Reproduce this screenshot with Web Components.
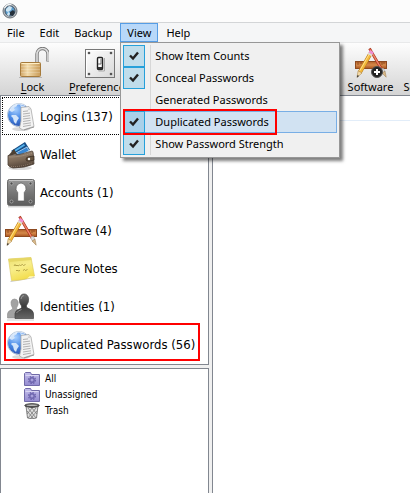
<!DOCTYPE html>
<html lang="en">
<head>
<meta charset="utf-8">
<meta name="viewport" content="width=device-width, initial-scale=1">
<title>Password Manager</title>
<style>
    html, body { margin: 0; height: 100%; }
    body {
        font: 11px/16px "Noto Sans", "Open Sans", sans-serif;
        color: #000;
        background: #f0f0f0;
        overflow: hidden;
    }
</style>
</head>
<body>
<password-app></password-app>

<script>
const define = (name, html, setup) => {
    const template = document.createElement('template');
    template.innerHTML = html;
    customElements.define(name, class extends HTMLElement {
        constructor() {
            super();
            this.attachShadow({ mode: 'open' });
            this.shadowRoot.appendChild(template.content.cloneNode(true));
        }
        connectedCallback() {
            if (setup) setup(this, this.shadowRoot);
        }
    });
};

const tools = `
    <linearGradient id="wood" x2="0" y2="1"><stop offset="0" stop-color="#b4602a"/><stop offset=".5" stop-color="#d58a4a"/><stop offset="1" stop-color="#a9541f"/></linearGradient>
    <rect x="0.5" y="14.5" width="31" height="7" fill="url(#wood)" stroke="#8d4a20"/>
    <path d="M3 15v3M6 15v2M9 15v3M24 15v2M27 15v3M29 15v2" stroke="#7d3c14" stroke-width=".7"/>
    <path d="M14.5 1.5L27 23" stroke="#9c2f18" stroke-width="2.6"/>
    <path d="M14.8 2L27 23" stroke="#e2644a" stroke-width="1.6"/>
    <path d="M15.5 3L26.5 22" stroke="#f8b09a" stroke-width=".5"/>
    <path d="M25.5 22.5l2.6-1.5 2 3.4-2.8 1.6z" fill="#ddd" stroke="#999" stroke-width=".5"/>
    <path d="M27 26l3-1.8 1.2 6z" fill="#d9b98a" stroke="#9b7a4b" stroke-width=".5"/>
    <path d="M15.5 6.5L5 25" stroke="#b67a18" stroke-width="4.2"/>
    <path d="M15.5 6.5L5 25" stroke="#f3b83b" stroke-width="3.2"/>
    <path d="M14.6 6.5L4.5 24.2" stroke="#ffe08a" stroke-width="1"/>
    <path d="M13.6 5.4l1.3-2.4 4 2.2-1.4 2.5z" fill="#ee8fd0"/>
    <path d="M12.7 7l.9-1.6 3.9 2.3-.9 1.6z" fill="#ddd"/>
    <path d="M3.1 23.8l3.9 2.3-5 4.2z" fill="#f2d9a8" stroke="#a47a35" stroke-width=".5"/>
    <path d="M2.5 28l1.6 1-2.3 1.7z" fill="#333"/>`;

const icons = {
    app: [16, `
        <circle cx="8" cy="8" r="7" fill="#b4b9be" stroke="#6c747b"/>
        <circle cx="8" cy="8" r="5" fill="#5b9ccc" stroke="#456"/>
        <path d="M4 6l3-3 3 1-1 3-3 2-2-1zM6 9l2 1-1 3-2-1z" fill="#cfe6f3"/>
        <path d="M8 9l3-2 2 2-2 4-3-1z" fill="#25313c"/>
        <path d="M2.500 5a6.500 6.500 0 0 1 7-3.500" fill="none" stroke="#f4f6f7" stroke-width="1.200"/>`],
    lock: [32, `
        <linearGradient id="gold"><stop offset="0" stop-color="#d0a566"/><stop offset=".35" stop-color="#f2dbab"/><stop offset="1" stop-color="#c99b57"/></linearGradient>
        <path d="M20 15V7a5.500 5.500 0 0 1 11 0v7.500" fill="none" stroke="#777" stroke-width="3.400"/>
        <path d="M20 15V7a5.500 5.500 0 0 1 11 0v7" fill="none" stroke="#dedede" stroke-width="1.600"/>
        <rect x="3.500" y="15.500" width="20" height="14" rx="1" fill="url(#gold)" stroke="#a67b3c"/>
        <path d="M4.500 16.500h18" stroke="#ffeec4"/>
        <path d="M4 19.500h19M4 22.500h19M4 25.500h19" stroke="#fff" stroke-opacity=".2"/>
        <path d="M2 30.500h23" stroke="#000" stroke-opacity=".18"/>`],
    preferences: [32, `
        <linearGradient id="plate" x2="1" y2="1"><stop offset="0" stop-color="#fff"/><stop offset="1" stop-color="#d8d8d8"/></linearGradient>
        <rect x="1.500" y="2.500" width="29" height="28" fill="url(#plate)" stroke="#777"/>
        <path d="M2.500 29.500v-26h27" fill="none" stroke="#fff"/>
        <g fill="#555"><circle cx="5" cy="6" r="1.300"/><circle cx="27" cy="6" r="1.300"/><circle cx="5" cy="27" r="1.300"/><circle cx="27" cy="27" r="1.300"/></g>
        <rect x="13.500" y="10.500" width="5" height="12" rx="1" fill="#fff" stroke="#222" stroke-width="1.400"/>
        <path d="M14 17h3v-5" fill="none" stroke="#666"/>
        <path d="M14 20h4v2.500h-4z" fill="#333"/>
        <path d="M20.500 11v13h-6" fill="none" stroke="#aaa"/>`],
    'software-add': [32, tools + `
        <circle cx="22" cy="25" r="5.500" fill="#222" stroke="#555"/>
        <path d="M22 22v6M19 25h6" stroke="#fff" stroke-width="2"/>`],
    software: [32, tools],
    logins: [32, `
        <radialGradient id="globe" cx=".35" cy=".25" r=".8"><stop offset="0" stop-color="#a8d0ff"/><stop offset=".5" stop-color="#4a8ae6"/><stop offset="1" stop-color="#2850ad"/></radialGradient>
        <ellipse cx="16" cy="28" rx="9" ry="2" fill="#000" opacity=".15"/>
        <circle cx="14" cy="14" r="11.500" fill="url(#globe)" stroke="#c3ced9"/>
        <path d="M4 10l4-5 4-2 0 2-3 2 1 2-3 2-2-1zM7 14l4 0 3 3-2 3-1 3-2-2-1-4-2-2zM15 4l4 1 3 3-4 0-2-2z" fill="#d3e5fa"/>
        <path d="M5 9a10 10 0 0 1 15-4" fill="none" stroke="#fff" stroke-opacity=".7"/>
        <path d="M16 6.500l8-1 2 2.500 3 17.500-11 3.500-3.500-2 1.500-7z" fill="#f3f3f3" stroke="#aaa" stroke-width=".8"/>
        <path d="M24 6l1.500 3-3 .2" fill="#d5d5d5"/>
        <path d="M18 10.500l5-.6M18 13l7-.9M18 15.500l7-.9M18 18l7.500-1M18 20.500l7.500-1.100M18 23l8-1.200M18 25.500l8-1.400" stroke="#aaa" stroke-width=".9"/>
        <path d="M19 29l10-3" stroke="#999"/>`],
    wallet: [32, `
        <linearGradient id="leather" x2=".3" y2="1"><stop offset="0" stop-color="#a18e7c"/><stop offset=".6" stop-color="#7c6957"/><stop offset="1" stop-color="#54453a"/></linearGradient>
        <ellipse cx="15" cy="29" rx="12" ry="2" fill="#000" opacity=".15"/>
        <path d="M6 12l14-9 5 8-12 6z" fill="#174e87"/>
        <path d="M8 12l11-7 1 1.500-11 7z" fill="#55b2ec"/>
        <path d="M11 14l11-6 2 4-9 4z" fill="#3886d2" stroke="#d7efff" stroke-width=".7"/>
        <path d="M3 17l6-7 3 5z" fill="#4d4032"/>
        <path d="M3 16.500q12 0 24-4.500 1 0 1.200 2L29 25q-9 4-21 4-4-1-5-3z" fill="url(#leather)" stroke="#4c4036" stroke-width=".8"/>
        <path d="M4.500 18q12 0 22.500-4" fill="none" stroke="#c5b3a0" stroke-width=".6" stroke-dasharray="1 1"/>
        <path d="M6 27.500q11 .5 21-3.500" fill="none" stroke="#b49f8a" stroke-width=".6" stroke-dasharray="1 1"/>
        <path d="M29 17l-5 .7q-3 .5-3 2.400 0 2.400 3 2l5-1z" fill="#66543f" stroke="#32261e" stroke-width=".7"/>
        <circle cx="24" cy="20" r="1.200" fill="#fff"/>`],
    accounts: [32, `
        <linearGradient id="steel" x2="0" y2="1"><stop offset="0" stop-color="#979797"/><stop offset=".5" stop-color="#777"/><stop offset="1" stop-color="#5c5c5c"/></linearGradient>
        <rect x="2.500" y="2.500" width="27" height="26" rx="2" fill="url(#steel)" stroke="#6b6b6b"/>
        <path d="M4 3.500h24" stroke="#c4c4c4"/>
        <g fill="#4c4c4c" stroke="#b5b5b5" stroke-width=".7"><circle cx="6.500" cy="6.500" r="1.500"/><circle cx="25.500" cy="6.500" r="1.500"/><circle cx="6.500" cy="24.500" r="1.500"/><circle cx="25.500" cy="24.500" r="1.500"/></g>
        <path d="M16 6a5.500 5.500 0 0 1 3.300 9.500v8.500h-6.600v-8.500A5.500 5.500 0 0 1 16 6z" fill="#fff" stroke="#555" stroke-width=".7"/>
        <path d="M3 29.800h26" stroke="#000" stroke-opacity=".25"/>`],
    notes: [32, `
        <linearGradient id="paper" x2=".4" y2="1"><stop offset="0" stop-color="#ecdf70"/><stop offset=".5" stop-color="#f8ee8c"/><stop offset="1" stop-color="#f3de50"/></linearGradient>
        <path d="M5 28l24-4 1 1-24 4z" fill="#000" opacity=".2"/>
        <path d="M3.500 6l22.500-1.500 3.500 18.500q-10 4.500-23 4.500z" fill="url(#paper)" stroke="#dcc85a" stroke-width=".6"/>
        <path d="M3.500 6l22.500-1.500.5 2.500-22.400 2z" fill="#e6d765"/>
        <path d="M9 13l1-1.500 1 1.500 1-1 1 1 1.500-1 1 .5 2-1 1 1 2-1M11 18l1-1 1 1 2-.5M18 17.500l1.500-1 1 1 2-1" fill="none" stroke="#a3913a" stroke-width=".8"/>
        <path d="M22 25.500q5-.5 7.500-2.500l-5 .3z" fill="#fff8b9"/>`],
    identities: [32, `
        <linearGradient id="man" x2="0" y2="1"><stop offset="0" stop-color="#707070"/><stop offset=".5" stop-color="#3c3c3c"/><stop offset="1" stop-color="#666"/></linearGradient>
        <path d="M2.500 27v-4q0-3 4.500-4.500.7-.5.5-1.500-1.700-3-1.500-6 .7-3 3.500-3t3.700 3q.3 3-1.700 6 0 1 1 1.500l4 3.500v5z" fill="#a2a2a2" stroke="#8b8b8b" stroke-width=".6"/>
        <path d="M10 27.500v-5q0-3 5.500-5 1.600-.8 1-2.500-2.500-3-2.100-7 .9-5 4.600-5t4.600 4.500q.4 4-2.100 7-.5 1.700 1 2.500 6 2 6 5.500v5z" fill="url(#man)" stroke="#444" stroke-width=".7"/>
        <path d="M11.500 22q1-2 5-3.500M16 8q.5-3.500 3-3.500" fill="none" stroke="#aaa" stroke-width=".7"/>
        <path d="M2 29h27" stroke="#000" stroke-opacity=".2"/>`],
    folder: [16, `
        <linearGradient id="fold" x2="0" y2="1"><stop offset="0" stop-color="#c3beea"/><stop offset="1" stop-color="#948bd0"/></linearGradient>
        <path d="M.5 14.500v-12l1-1h5l1 2h8v11z" fill="url(#fold)" stroke="#716aa8"/>
        <path d="M1.500 4.500h13" stroke="#d9d5f3"/>
        <circle cx="8" cy="9" r="3.500" fill="none" stroke="#6d64ad" stroke-width="1.200" stroke-dasharray="1.500 1.250"/>
        <circle cx="8" cy="9" r="2.200" fill="none" stroke="#6d64ad" stroke-width="1.400"/>`],
    trash: [16, `
        <path d="M2 3l1.500 12q4.500 1.500 9 0L14 3z" fill="#e0e0e0" stroke="#666" stroke-width=".8"/>
        <path d="M4 5l8 10M7 4l6 7M3 8l6 7M12 5l-8 10M9 4l-6 7M13 8l-6 7" stroke="#777" stroke-width=".8"/>
        <ellipse cx="8" cy="2.500" rx="7.300" ry="1.900" fill="#555" stroke="#333" stroke-width=".7"/>
        <ellipse cx="8" cy="2.200" rx="5.500" ry=".8" fill="#bbb"/>`]
};

define('app-icon', `
    <style>
        :host { display: block; flex: none; }
        svg { display: block; }
    </style>`, (el, root) => {
    const [size, body] = icons[el.getAttribute('name')];
    root.innerHTML += `<svg width="${size}" height="${size}" viewBox="0 0 ${size} ${size}" aria-hidden="true">${body}</svg>`;
});

// Fills the icon holder of a button from the host's icon attribute
const placeIcon = (el, root) => {
    root.querySelector('.icon').innerHTML = `<app-icon name="${el.getAttribute('icon')}"></app-icon>`;
};

define('title-bar', `
    <style>
        :host { display: flex; align-items: center; height: 22px; padding-left: 2px; background: #fcfcfc; border-bottom: 1px solid #d3d5d7; }
    </style>
    <app-icon name="app"></app-icon>`);

define('menu-bar', `
    <style>
        :host { display: flex; gap: 1px; height: 19px; background: #f5f6f7; border-bottom: 1px solid #e8e9ea; }
    </style>
    <slot></slot>`);

define('menu-entry', `
    <style>
        :host { display: block; position: relative; }
        button {
            box-sizing: border-box;
            height: 19px;
            padding: 0 6px;
            font: inherit;
            color: inherit;
            background: none;
            border: 1px solid transparent;
            white-space: nowrap;
        }
        :host([open]) button { background: #b8d8f9; border-color: #569de5; }
        slot[name=popup] { display: none; }
        :host([open]) slot[name=popup] { display: block; }
    </style>
    <button type="button" aria-haspopup="menu"><slot></slot></button>
    <slot name="popup"></slot>`);

define('menu-popup', `
    <style>
        :host {
            box-sizing: border-box;
            display: block;
            position: absolute;
            top: 100%;
            left: 0;
            z-index: 10;
            width: 220px;
            padding: 2px;
            background: #f0f0f0;
            border: 1px solid #979797;
            box-shadow: 3px 3px 3px rgba(0, 0, 0, .5);
        }
        .items { background: linear-gradient(#d7d7d7, #d7d7d7) 27px 0 / 1px 100% no-repeat; }
    </style>
    <div class="items"><slot></slot></div>`);

define('check-item', `
    <style>
        :host { display: block; position: relative; }
        label { display: grid; grid-template-columns: 22px 1fr; column-gap: 10px; align-items: center; height: 22px; }
        input { grid-area: 1 / 1; box-sizing: border-box; appearance: none; width: 22px; height: 22px; margin: 0; }
        input:checked { background: #c0ddeb; border: 1px solid #26a0da; }
        svg { grid-area: 1 / 1; justify-self: center; visibility: hidden; pointer-events: none; z-index: 1; }
        input:checked + svg { visibility: visible; }
        span { grid-area: 1 / 2; }
        :host([active]) label { background: #d1e2f2; box-shadow: inset 0 0 0 1px #78aee5; }
        :host([active]) input:checked { background: #a9d0e9; }
    </style>
    <label>
        <input type="checkbox">
        <svg width="10" height="10" viewBox="0 0 10 10"><path d="M1 4.500l3 3L9 1.500" fill="none" stroke="#222" stroke-width="2.400"/></svg>
        <span><slot></slot></span>
    </label>
    <slot name="mark"></slot>`, (el, root) => {
    root.querySelector('input').checked = el.hasAttribute('checked');
});

// Red frame drawn over the item that holds it
define('red-frame', `
    <style>
        :host {
            box-sizing: border-box;
            position: absolute;
            inset: var(--frame-inset, 0);
            border: 2px solid #f00;
            pointer-events: none;
            z-index: 2;
        }
    </style>`);

define('tool-bar', `
    <style>
        :host {
            display: flex;
            gap: 2px;
            height: 52px;
            background: linear-gradient(#fdfdfd, #d4d4d4);
            overflow: hidden;
        }
    </style>
    <slot></slot>`);

define('tool-button', `
    <style>
        :host { display: block; flex: none; }
        button {
            display: flex;
            flex-direction: column;
            align-items: center;
            width: 65px;
            padding: 4px 0 0;
            font: inherit;
            color: inherit;
            background: none;
            border: 0;
            white-space: nowrap;
        }
        ::slotted(u) { text-underline-offset: 2px; }
    </style>
    <button type="button"><div class="icon"></div><span><slot></slot></span></button>`, placeIcon);

define('category-row', `
    <style>
        :host { display: block; position: relative; }
        button {
            box-sizing: border-box;
            display: flex;
            align-items: center;
            gap: 3px;
            width: 100%;
            height: 38px;
            padding: 2px 2px 0;
            font: inherit;
            color: inherit;
            background: none;
            border: 1px dotted transparent;
            white-space: nowrap;
        }
        :host([selected]) button { border-color: #000; }
    </style>
    <button type="button"><div class="icon"></div><span><slot></slot></span></button>
    <slot name="mark"></slot>`, placeIcon);

define('folder-row', `
    <style>
        :host { display: block; }
        button {
            display: flex;
            align-items: center;
            gap: 5px;
            height: 16px;
            padding: 0;
            font: inherit;
            color: inherit;
            background: none;
            border: 0;
        }
    </style>
    <button type="button"><div class="icon"></div><span><slot></slot></span></button>`, placeIcon);

define('password-app', `
    <style>
        :host { display: flex; flex-direction: column; height: 100%; }
        .spacer { flex: 0 0 202px; }
        .body { flex: 1; display: flex; gap: 3px; min-height: 0; }
        aside { flex: 0 0 209px; display: flex; flex-direction: column; gap: 3px; }
        .categories, .folders { background: #fff; border: 1px solid #828790; font-family: "DejaVu Sans Condensed", "DejaVu Sans", sans-serif; }
        .categories { padding: 1px; font-size: 13px; }
        .categories red-frame { --frame-inset: -2px 7px 2px 2px; }
        .folders { flex: 1; padding: 2px 0 0 23px; font-size: 10px; border-bottom: 0; }
        main { flex: 1; background: #fff; border: solid #828790; border-width: 1px 0 0 1px; }
        .columns { height: 24px; border-bottom: 1px solid #e2edf9; }
        menu-popup red-frame { --frame-inset: -2px 60px -2px 0; }
    </style>
    <title-bar></title-bar>
    <menu-bar>
        <menu-entry>File</menu-entry>
        <menu-entry>Edit</menu-entry>
        <menu-entry>Backup</menu-entry>
        <menu-entry open>View
            <menu-popup slot="popup">
                <check-item checked>Show Item Counts</check-item>
                <check-item checked>Conceal Passwords</check-item>
                <check-item>Generated Passwords</check-item>
                <check-item checked active>Duplicated Passwords<red-frame slot="mark"></red-frame></check-item>
                <check-item checked>Show Password Strength</check-item>
            </menu-popup>
        </menu-entry>
        <menu-entry>Help</menu-entry>
    </menu-bar>
    <tool-bar>
        <tool-button icon="lock"><u>L</u>ock</tool-button>
        <tool-button icon="preferences"><u>P</u>references</tool-button>
        <div class="spacer"></div>
        <tool-button icon="software-add">Software</tool-button>
        <tool-button icon="notes">Secure Notes</tool-button>
    </tool-bar>
    <div class="body">
        <aside>
            <div class="categories">
                <category-row icon="logins" selected>Logins (137)</category-row>
                <category-row icon="wallet">Wallet</category-row>
                <category-row icon="accounts">Accounts (1)</category-row>
                <category-row icon="software">Software (4)</category-row>
                <category-row icon="notes">Secure Notes</category-row>
                <category-row icon="identities">Identities (1)</category-row>
                <category-row icon="logins">Duplicated Passwords (56)<red-frame slot="mark"></red-frame></category-row>
            </div>
            <div class="folders">
                <folder-row icon="folder">All</folder-row>
                <folder-row icon="folder">Unassigned</folder-row>
                <folder-row icon="trash">Trash</folder-row>
            </div>
        </aside>
        <main><div class="columns"></div></main>
    </div>`);
</script>
</body>
</html>
